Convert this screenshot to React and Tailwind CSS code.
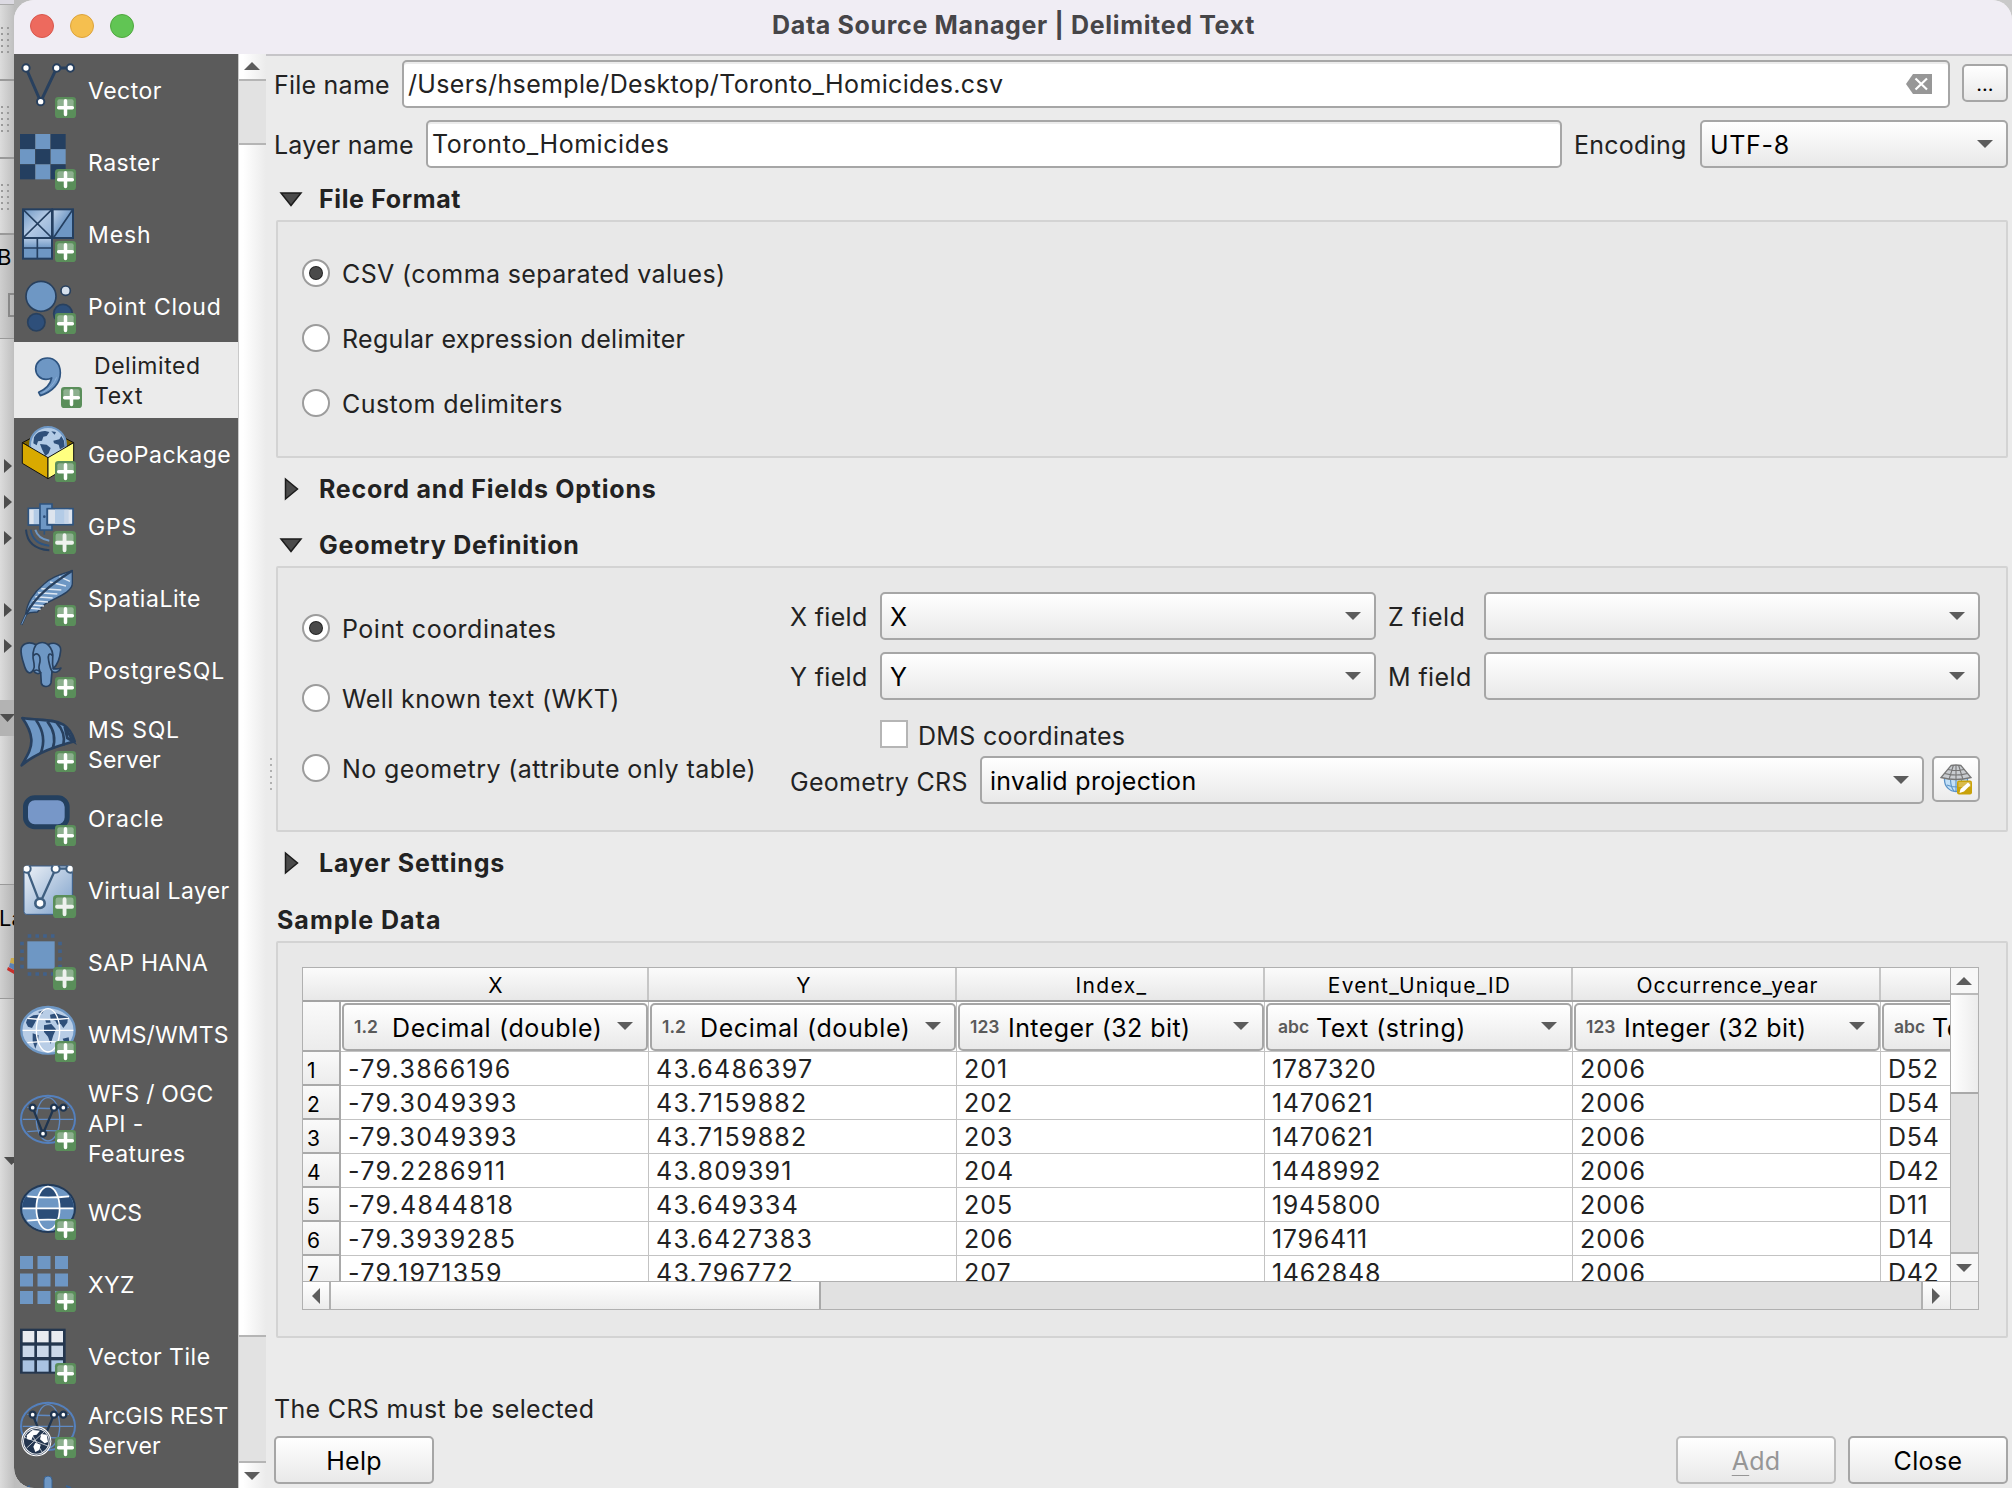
import React from "react";

const NAVY = "#28405e";
const BLUE = "#6e97c4";

/* ---------- sidebar icons (168 × 168 drawing units, shown at 56px) ---------- */

function Badge({ big = false }) {
  return (
    <g transform={big ? "translate(99 99) scale(1.1)" : "translate(105 105)"}>
      <rect width="63" height="63" rx="10" fill="#5a8e5a" />
      <path d="M7 31V13q0-6 6-6h37q6 0 6 6v18z" fill="#8db08f" />
      <path d="M31.500 11.500v41M11 32h41" stroke={big ? "#eef2ee" : "#fff"} strokeWidth="10.500" strokeLinecap="round" fill="none" />
    </g>
  );
}

function GlobeLines({ color, width = 4 }) {
  return (
    <g fill="none" stroke={color} strokeWidth={width}>
      <ellipse cx="84" cy="73" rx="35" ry="65" />
      <path d="M8 73H160M22 37Q84 44 147 37M22 110Q84 104 147 110" />
    </g>
  );
}

function Node({ x, y, r = 11, fill = "#fff", stroke = NAVY, w = 6 }) {
  return <circle cx={x} cy={y} r={r} fill={fill} stroke={stroke} strokeWidth={w} />;
}

const CELLS = [0, 1, 2];

const ICONS = {
  vector: (
    <>
      <path d="M18 18L62 119L110 18H151" fill="none" stroke={NAVY} strokeWidth="9" />
      <Node x={18} y={18} /><Node x={62} y={119} /><Node x={110} y={18} /><Node x={151} y={18} />
      <Badge />
    </>
  ),
  raster: (
    <>
      {CELLS.map((r) =>
        CELLS.map((c) => (
          <rect key={r + "-" + c} x={c * 46} y={r * 45.5} width="45" height="45" fill={(r + c) % 2 ? BLUE : "#243f60"} />
        ))
      )}
      <Badge />
    </>
  ),
  mesh: (
    <>
      <defs>
        <linearGradient id="meshA" x1="0" y1="0" x2="1" y2="1">
          <stop offset="0" stopColor="#6e97c4" /><stop offset=".5" stopColor="#b3c9e4" /><stop offset="1" stopColor="#8fb0d6" />
        </linearGradient>
        <linearGradient id="meshB" x1="0" y1="0" x2="1" y2="1">
          <stop offset="0" stopColor="#c4d5ea" /><stop offset=".55" stopColor="#6e97c4" />
        </linearGradient>
        <linearGradient id="meshC" x1="0" y1="0" x2="0" y2="1">
          <stop offset="0" stopColor="#b3c9e4" /><stop offset=".5" stopColor="#6e97c4" />
        </linearGradient>
      </defs>
      <g stroke="#243f60" strokeWidth="6">
        <rect x="9" y="96" width="87" height="62" fill="url(#meshC)" />
        <rect x="9" y="10" width="87" height="86" fill="url(#meshA)" />
        <rect x="98" y="10" width="61" height="86" fill="url(#meshB)" />
        <path d="M9 10L96 96M96 10L9 96M159 10L100 96M52 96V158M9 126H96" fill="none" strokeWidth="5" />
      </g>
      <Badge />
    </>
  ),
  cloud: (
    <>
      <Node x={129} y={107} r={28} fill="#2e4f7a" w={5} />
      <Node x={63} y={55} r={45} fill={BLUE} w={5} />
      <Node x={137} y={38} r={14} fill="#d6e0ec" w={5} />
      <Node x={49} y={133} r={26} fill="#2e4f7a" w={5} />
      <Badge />
    </>
  ),
  comma: (
    <>
      <path
        d="M64 18C44 18 29 32 29 50C29 69 43 82 60 82C67 82 72 81 77 78C73 98 58 112 38 121L43 131C80 119 103 94 103 62C103 36 87 18 64 18Z"
        fill={BLUE} stroke="#2e5480" strokeWidth="5" strokeLinejoin="round"
      />
      <path d="M92 76Q82 104 50 122" fill="none" stroke="#8db0d8" strokeWidth="3" />
      <Badge />
    </>
  ),
  geopackage: (
    <>
      <path d="M7 50L84 10L161 50L84 95Z" fill="#7d6400" stroke="#111" strokeWidth="3" />
      <circle cx="84" cy="57" r="54" fill="#b3cbe6" stroke="#6e97c4" strokeWidth="6" />
      <path d="M42 34Q52 14 76 15L88 18L80 30L70 32L66 44L54 46L50 58L40 52ZM60 54L80 56L92 66L86 82L76 90L66 70ZM100 44L118 40L124 30L132 44L134 62L120 70L116 56L102 52ZM94 16L108 18L104 26Z" fill="#2e4f7a" />
      <path d="M7 50L84 95V158L7 112Z" fill="#d9aa00" stroke="#111" strokeWidth="3" strokeLinejoin="round" />
      <path d="M84 95L161 50V112L84 158Z" fill="#ffff80" stroke="#111" strokeWidth="3" strokeLinejoin="round" />
      <Badge />
    </>
  ),
  gps: (
    <>
      <rect x="25" y="31" width="36" height="50" fill="#dde4ee" stroke="#2e5480" strokeWidth="5" />
      <rect x="41" y="34" width="18" height="44" fill="#b3cbe6" />
      <path d="M60 18H96V34H82V80H96V96H60Z" fill={BLUE} stroke="#2e5480" strokeWidth="5" />
      <rect x="82" y="32" width="77" height="48" fill="#dde4ee" stroke="#2e5480" strokeWidth="5" />
      <rect x="105" y="35" width="29" height="42" fill="#b3cbe6" />
      <rect x="134" y="35" width="12" height="42" fill="#c6d5e8" />
      <circle cx="73" cy="56" r="4" fill="#2e4f7a" />
      <path d="M73 96V110" stroke="#2e5480" strokeWidth="5" />
      <g fill="none" strokeWidth="6">
        <path d="M18 95Q22 152 88 157" stroke={NAVY} />
        <path d="M32 95Q38 138 88 143" stroke="#2e5480" />
        <path d="M46 95Q54 122 88 128" stroke={BLUE} />
      </g>
      <Badge big />
    </>
  ),
  feather: (
    <>
      <path d="M157 2C128 12 92 20 70 44C42 66 20 100 17 134L30 128L52 126C62 116 66 106 82 98C110 82 158 66 157 40Z" fill={BLUE} stroke={NAVY} strokeWidth="4" />
      <path d="M64 56L124 60M54 68L112 72M46 80L98 84M38 92L84 96M32 104L72 108M28 114L62 118M90 36L138 48M118 20L150 34" stroke="#dfe8f3" strokeWidth="4.500" />
      <path d="M157 2C110 34 50 70 20 130L4 164" fill="none" stroke={NAVY} strokeWidth="7" />
      <path d="M18 134L5 163" stroke={BLUE} strokeWidth="3" />
      <Badge />
    </>
  ),
  postgres: (
    <>
      <g fill={BLUE} stroke={NAVY} strokeWidth="5" strokeLinejoin="round" strokeLinecap="round">
        <path d="M84 8C104 -2 124 8 122 26C120 48 112 68 100 80C112 82 118 80 123 78C118 90 104 94 96 88L93 122C90 136 68 138 64 124L62 92C54 98 44 94 40 84C30 100 20 92 14 74C8 56 0 34 4 18C10 0 34 0 48 8C60 0 74 0 84 8Z" />
        <path d="M48 8C36 26 38 48 42 64C44 74 42 80 40 84M84 8C98 22 100 34 98 50C97 60 98 72 100 80M42 40C50 30 62 38 60 58C58 72 52 78 62 92M96 40C88 30 82 40 86 56C88 66 90 78 96 88M62 92Q52 80 44 86" fill="none" />
      </g>
      <Badge />
    </>
  ),
  mssql: (
    <>
      <path d="M7 6C60 14 98 8 130 26C150 38 158 56 164 76C106 92 50 110 5 148C24 116 36 96 34 70C32 44 20 24 7 6Z" fill={BLUE} stroke={NAVY} strokeWidth="8" strokeLinejoin="round" />
      <path d="M48 12C72 46 76 76 62 112M82 16C104 44 108 68 98 98M110 20C130 42 136 62 130 88M134 32L160 76L142 66Z" fill="none" stroke={NAVY} strokeWidth="8" />
      <Badge />
    </>
  ),
  oracle: (
    <>
      <rect x="16.500" y="23" width="125" height="87" rx="28" fill="#7797c8" stroke="#24405f" strokeWidth="15" />
      <Badge />
    </>
  ),
  virtual: (
    <>
      <defs>
        <linearGradient id="virt" x1="0" y1="0" x2="1" y2="1">
          <stop offset="0" stopColor="#eef2f7" /><stop offset="1" stopColor="#7b9fca" />
        </linearGradient>
        <clipPath id="virtClip"><rect x="11" y="11" width="147" height="147" rx="8" /></clipPath>
      </defs>
      <rect x="12" y="12" width="145" height="145" rx="8" fill="url(#virt)" stroke="#3a5f8c" strokeWidth="3" />
      <g clipPath="url(#virtClip)">
        <path d="M20 20L60 124L107 20H151" fill="none" stroke="#3f5f80" strokeWidth="7" />
        <Node x={20} y={20} r={12} stroke="#3f5f80" /><Node x={60} y={124} r={14} stroke="#3f5f80" w={8} />
        <Node x={107} y={20} r={12} stroke="#3f5f80" /><Node x={151} y={20} r={12} stroke="#3f5f80" />
      </g>
      <Badge big />
    </>
  ),
  hana: (
    <>
      <rect x="22" y="22" width="82" height="82" fill={BLUE} />
      <g stroke="#41618a" strokeWidth="11" strokeDasharray="11 12.200" fill="none">
        <path d="M23 6H104" /><path d="M23 120H104" /><path d="M6 23V104" /><path d="M120 23V104" />
      </g>
      <Badge big />
    </>
  ),
  wms: (
    <>
      <ellipse cx="84" cy="73" rx="80" ry="70" fill="#b8cde6" stroke={BLUE} strokeWidth="7" />
      <path d="M22 38L40 28L56 26L50 40L44 52L36 66L24 62L18 50ZM54 18L72 12L66 24ZM90 26L108 22L144 34L142 50L130 66L122 54L112 56L106 44L92 40ZM72 58L94 54L108 70L100 88L92 114L84 92L72 78ZM38 82L56 88L54 104L46 128L38 106ZM128 98L146 94L148 106L132 108ZM76 42L90 40L92 50L78 50Z" fill="#2e4f7a" />
      <GlobeLines color="#fff" />
      <Badge />
    </>
  ),
  wfs: (
    <>
      <ellipse cx="84" cy="73" rx="81" ry="71" fill="none" stroke="#5480bd" strokeWidth="6" />
      <GlobeLines color="#5f8ac4" />
      <path d="M38 38L69 116L102 38H130" fill="none" stroke="#1f3550" strokeWidth="7" />
      <Node x={38} y={38} r={9} stroke="#1f3550" w={7} /><Node x={69} y={116} r={9} stroke="#1f3550" w={7} />
      <Node x={102} y={38} r={9} stroke="#1f3550" w={7} /><Node x={130} y={38} r={9} stroke="#1f3550" w={7} />
      <Badge />
    </>
  ),
  wcs: (
    <>
      <defs>
        <clipPath id="wcsE"><ellipse cx="84" cy="73" rx="78" ry="68" /></clipPath>
        <clipPath id="wcsI"><ellipse cx="84" cy="73" rx="35" ry="65" /></clipPath>
      </defs>
      <ellipse cx="84" cy="73" rx="81" ry="71" fill={BLUE} stroke="#223a58" strokeWidth="6" />
      <g clipPath="url(#wcsE)" fill="#2b4d78"><rect x="0" y="38" width="168" height="35" /><rect x="0" y="108" width="168" height="40" fill={BLUE} /></g>
      <g clipPath="url(#wcsI)" fill="#2b4d78"><rect x="40" y="0" width="90" height="38" /><rect x="40" y="38" width="90" height="35" fill={BLUE} /><rect x="40" y="73" width="90" height="35" /></g>
      <GlobeLines color="#fff" width={5} />
      <Badge />
    </>
  ),
  xyz: (
    <>
      {CELLS.map((r) =>
        CELLS.map((c) => <rect key={r + "-" + c} x={c * 52.500} y={r * 52.500} width="39" height="39" fill={BLUE} />)
      )}
      <Badge />
    </>
  ),
  tile: (
    <>
      <rect x="0" y="2" width="137" height="135" fill="#24364e" />
      {CELLS.map((r) =>
        CELLS.map((c) => (
          <rect key={r + "-" + c} x={8 + c * 43} y={9 + r * 44} width="35" height="34" fill={["#e9ecf1", "#cad7e8", "#a9c3e2"][r]} />
        ))
      )}
      <Badge />
    </>
  ),
  arcgis: (
    <>
      <ellipse cx="84" cy="73" rx="81" ry="71" fill="none" stroke="#5480bd" strokeWidth="6" />
      <GlobeLines color="#5f8ac4" />
      <path d="M38 38L69 116L102 38H130" fill="none" stroke="#1f3550" strokeWidth="7" />
      <Node x={38} y={38} r={9} stroke="#1f3550" w={7} /><Node x={102} y={38} r={9} stroke="#1f3550" w={7} />
      <Node x={130} y={38} r={9} stroke="#1f3550" w={7} />
      <circle cx="49" cy="118" r="45" fill="#fff" />
      <circle cx="49" cy="118" r="41" fill="none" stroke="#22344e" strokeWidth="2" />
      <circle cx="49" cy="118" r="37" fill="#22344e" />
      <path d="M20 100L38 84L60 86L50 98L40 100L34 114L22 112ZM64 96L80 98L84 120L74 124L60 112ZM46 122L62 128L58 144L46 150L40 134Z" fill="#fff" />
      <path d="M14 106L84 132M30 88L66 150M20 138L72 90" stroke="#fff" strokeWidth="2" />
      <Badge />
    </>
  ),
};

function SideIcon({ name }) {
  return (
    <svg viewBox="0 0 168 168" className="h-14 w-14 shrink-0 overflow-visible">
      {ICONS[name]}
    </svg>
  );
}

/* ---------- sidebar ---------- */

const SOURCES = [
  { icon: "vector", lines: [["Vector", "tracking-[0.47px]"]] },
  { icon: "raster", lines: [["Raster", "tracking-[0.51px]"]] },
  { icon: "mesh", lines: [["Mesh", "tracking-[0.89px]"]] },
  { icon: "cloud", lines: [["Point Cloud", "tracking-[0.74px]"]] },
  { icon: "comma", active: true, h: "h-[76px]", lines: [["Delimited", "tracking-[0.55px]"], ["Text", "tracking-[0.68px]"]] },
  { icon: "geopackage", lines: [["GeoPackage", "tracking-[0.5px]"]] },
  { icon: "gps", lines: [["GPS", "tracking-[0.83px]"]] },
  { icon: "feather", lines: [["SpatiaLite", "tracking-[0.57px]"]] },
  { icon: "postgres", lines: [["PostgreSQL", "tracking-[0.8px]"]] },
  { icon: "mssql", h: "h-[76px]", lines: [["MS SQL", "tracking-[0.73px]"], ["Server", "tracking-[0.19px]"]] },
  { icon: "oracle", lines: [["Oracle", "tracking-[0.83px]"]] },
  { icon: "virtual", lines: [["Virtual Layer", "tracking-[0.38px]"]] },
  { icon: "hana", lines: [["SAP HANA", "tracking-[0.28px]"]] },
  { icon: "wms", lines: [["WMS/WMTS", "tracking-[0.13px]"]] },
  { icon: "wfs", h: "h-[106px]", lines: [["WFS / OGC", "tracking-[0.19px]"], ["API -", "tracking-[0.37px]"], ["Features", "tracking-[0.42px]"]] },
  { icon: "wcs", lines: [["WCS", "tracking-[-0.1px]"]] },
  { icon: "xyz", lines: [["XYZ", "tracking-[0.35px]"]] },
  { icon: "tile", lines: [["Vector Tile", "tracking-[0.52px]"]] },
  { icon: "arcgis", h: "h-[76px]", lines: [["ArcGIS REST", "tracking-[0.02px]"], ["Server", "tracking-[0.19px]"]] },
];

function Sidebar() {
  return (
    <nav className="flex w-[224px] shrink-0 flex-col overflow-hidden rounded-bl-[20px] bg-[#5b5b5b]">
      {SOURCES.map((s) => (
        <div
          key={s.icon}
          className={`flex shrink-0 items-center gap-3 ${s.h || "h-[72px]"} ${s.active ? "bg-[#ebebeb] pl-3 text-[#222]" : "pl-[6px] text-white"}`}
        >
          <SideIcon name={s.icon} />
          <div className="pt-[2px] text-[23px] leading-[30px] whitespace-nowrap">
            {s.lines.map(([t, track]) => (
              <div key={t} className={track}>{t}</div>
            ))}
          </div>
        </div>
      ))}
      <div className="flex h-5 shrink-0 items-start pt-2 pl-[6px]">
        <svg viewBox="0 0 56 12" className="h-3 w-14">
          <rect x="24" y="0" width="8" height="20" rx="4" fill={BLUE} stroke="#3a6290" />
          <path d="M6 12l4-2M46 10l5 2" stroke="#3a6290" strokeWidth="2" />
        </svg>
      </div>
    </nav>
  );
}

/* ---------- small controls ---------- */

function Arrow({ dir = "down", className = "" }) {
  const d = { down: "M0 4H16L8 12Z", up: "M0 12H16L8 4Z", left: "M12 0V16L4 8Z", right: "M4 0V16L12 8Z" }[dir];
  return (
    <svg viewBox="0 0 16 16" className={`h-4 w-4 shrink-0 ${className}`}>
      <path d={d} fill="#5c5c5c" />
    </svg>
  );
}

function SideScroll() {
  return (
    <div className="flex w-7 shrink-0 flex-col border-l border-[#c9c9c9] bg-[linear-gradient(to_right,#fff_15%,#ebebeb)]">
      <div className="flex h-[25px] items-center justify-center pr-px"><Arrow dir="up" className="mt-[-1px]" /></div>
      <div className="h-[66px] border-y-2 border-[#b5b5b5] bg-[#e2e2e2]" />
      <div className="flex-1" />
      <div className="h-[128px] border-y-2 border-[#b5b5b5] bg-[#e2e2e2]" />
      <div className="flex h-[25px] items-center justify-center pr-px"><Arrow /></div>
    </div>
  );
}

function Combo({ className, text, track = "" }) {
  return (
    <div className={`flex h-12 shrink-0 items-center justify-between rounded-[5px] border-2 border-[#a6a6a6] bg-gradient-to-b from-white to-[#e9e9e9] pr-[13px] pl-2 text-black ${className}`}>
      <span className={`pt-px ${track}`}>{text}</span>
      <Arrow className="mt-[-1px]" />
    </div>
  );
}

function Radio({ on = false, label, track, className }) {
  return (
    <div className={`flex items-center ${className}`}>
      <div className="flex h-7 w-7 shrink-0 items-center justify-center rounded-full border-2 border-[#9c9c9c] bg-white">
        {on && <div className="h-[12px] w-[12px] rounded-full bg-[#4a4a4a] ring-1 ring-[#222]" />}
      </div>
      <span className={`ml-3 pt-[2px] whitespace-nowrap ${track}`}>{label}</span>
    </div>
  );
}

function SectionHeader({ open, title, track, className }) {
  return (
    <div className={`flex items-center ${className}`}>
      <svg viewBox="0 0 24 24" className="ml-[5px] h-6 w-6 shrink-0">
        <path d={open ? "M2 6H22L12 18.500Z" : "M6.500 2V22L18.500 12Z"} fill="#4a4a4a" stroke="#1c1c1c" strokeWidth="1.500" />
      </svg>
      <span className={`ml-4 font-bold ${track}`}>{title}</span>
    </div>
  );
}

const GROUP = "ml-[3px] w-[1732px] shrink-0 rounded-[2px] border-2 border-[#d3d3d3] bg-[#e8e8e8]";
const BUTTON = "flex h-12 items-center justify-center rounded-[5px] border-2 bg-gradient-to-b from-white to-[#e9e9e9] pt-[2px]";

/* ---------- sample data table ---------- */

const COLUMNS = [
  { name: "X", tag: "1.2", type: "Decimal (double)", track: "tracking-[0.62px]" },
  { name: "Y", tag: "1.2", type: "Decimal (double)", track: "tracking-[0.62px]" },
  { name: "Index_", tag: "123", type: "Integer (32 bit)", track: "tracking-[0.42px]" },
  { name: "Event_Unique_ID", tag: "abc", type: "Text (string)", track: "tracking-[0.52px]" },
  { name: "Occurrence_year", tag: "123", type: "Integer (32 bit)", track: "tracking-[0.42px]" },
  { name: "", tag: "abc", type: "Text (string)", track: "tracking-[0.58px]" },
];
const HEAD_TRACK = ["", "", "tracking-[1.4px]", "tracking-[1.15px]", "tracking-[0.88px]", ""];
const CELL_TRACK = ["tracking-[1.3px]", "tracking-[1.25px]", "tracking-[1px]", "tracking-[0.7px]", "tracking-[0.9px]", "tracking-[0.7px]"];
const ROWS = [
  ["-79.3866196", "43.6486397", "201", "1787320", "2006", "D52"],
  ["-79.3049393", "43.7159882", "202", "1470621", "2006", "D54"],
  ["-79.3049393", "43.7159882", "203", "1470621", "2006", "D54"],
  ["-79.2286911", "43.809391", "204", "1448992", "2006", "D42"],
  ["-79.4844818", "43.649334", "205", "1945800", "2006", "D11"],
  ["-79.3939285", "43.6427383", "206", "1796411", "2006", "D14"],
  ["-79.1971359", "43.796772", "207", "1462848", "2006", "D42"],
];

function RowHead({ children, className }) {
  return (
    <div className={`w-[38px] shrink-0 border-r-2 border-b-2 border-[#a9a9a9] bg-gradient-to-b from-[#fafafa] to-[#ececec] pl-1 text-[21px] text-black ${className}`}>
      {children}
    </div>
  );
}

function DataTable() {
  return (
    <div className="mt-6 ml-6 flex h-[343px] w-[1677px] flex-col border border-[#b0b0b0] bg-white">
      <div className="flex h-[313px] shrink-0">
        <div className="w-[1647px] shrink-0 overflow-hidden">
          <div className="flex h-[34px] w-[1886px] border-b-2 border-[#a3a3a3] bg-gradient-to-b from-[#fbfbfb] to-[#e8e8e8] text-[21px] text-black">
            <div className="w-[38px] shrink-0" />
            {COLUMNS.map((c, i) => (
              <div key={i} className={`flex w-[308px] shrink-0 items-center justify-center border-r-2 border-[#c6c6c6] pt-[4px] pl-[3px] ${HEAD_TRACK[i]}`}>
                {c.name}
              </div>
            ))}
          </div>
          <div className="flex h-[50px] w-[1886px]">
            <RowHead />
            {COLUMNS.map((c, i) => (
              <div key={i} className="w-[308px] shrink-0 border-r border-b border-[#c3c3c3] pt-px pl-px">
                <div className="flex h-12 w-[306px] items-center rounded-[5px] border-2 border-[#a6a6a6] bg-gradient-to-b from-white to-[#e9e9e9] pr-[13px] pl-[10px] text-black">
                  <span className="w-[38px] shrink-0 text-[17.5px] font-semibold text-[#5a5a5a]">{c.tag}</span>
                  <span className={`flex-1 pt-[2px] whitespace-nowrap ${c.track}`}>{c.type}</span>
                  <Arrow className="mt-[-2px]" />
                </div>
              </div>
            ))}
          </div>
          {ROWS.map((r, n) => (
            <div key={n} className="flex h-[34px] w-[1886px]">
              <RowHead className="pt-[2px] leading-[33px]">{n + 1}</RowHead>
              {r.map((v, i) => (
                <div key={i} className={`w-[308px] shrink-0 border-r border-b border-[#c3c3c3] pl-[7px] leading-[35px] text-[#222] ${CELL_TRACK[i]}`}>
                  {v}
                </div>
              ))}
            </div>
          ))}
        </div>
        <div className="flex flex-1 flex-col border-l border-[#b0b0b0] bg-[#e1e1e1]">
          <div className="flex h-[27px] items-center justify-center border-b-2 border-[#b9b9b9] bg-[#f7f7f7] pr-px"><Arrow dir="up" /></div>
          <div className="h-[99px] border-b-2 border-[#a9a9a9] bg-gradient-to-r from-white to-[#ececec]" />
          <div className="flex-1" />
          <div className="flex h-[29px] items-center justify-center border-t-2 border-[#b0b0b0] bg-[#f7f7f7] pr-px"><Arrow /></div>
        </div>
      </div>
      <div className="flex flex-1 border-t border-[#b0b0b0] bg-[#e1e1e1]">
        <div className="flex w-7 items-center justify-center border-r-2 border-[#b0b0b0] bg-gradient-to-b from-white to-[#ececec]"><Arrow dir="left" className="ml-[-1px]" /></div>
        <div className="w-[490px] border-r-2 border-[#a9a9a9] bg-gradient-to-b from-white to-[#ececec]" />
        <div className="flex-1" />
        <div className="flex w-[29px] items-center justify-center border-l-2 border-[#b0b0b0] bg-gradient-to-b from-white to-[#ececec] pr-[2px]"><Arrow dir="right" /></div>
        <div className="w-[28px] border-l border-[#b0b0b0] bg-[#ebebeb]" />
      </div>
    </div>
  );
}

function CrsIcon() {
  return (
    <svg viewBox="0 0 32 32" className="h-8 w-8">
      <circle cx="16" cy="17" r="11.500" fill="#c3e0f7" stroke="#5b93c7" strokeWidth="1.300" />
      <path d="M16 17V29M7 22Q16 26 26 22M10.500 17Q11 25 14 28M21.500 17Q21 25 18 28" fill="none" stroke="#5b93c7" strokeWidth="1.100" />
      <path d="M11 2.500Q16 1.500 21 2.500L31 14.500Q16 18.500 1 14.500Z" fill="#c9ccd0" stroke="#777" strokeWidth="1.300" />
      <path d="M16 2V17M13.500 2L9 16.500M18.500 2L23 16.500M8 6.500Q16 8.500 24 6.500M4.500 10.500Q16 13.500 27.500 10.500" fill="none" stroke="#777" strokeWidth="1.100" />
      <rect x="17" y="17.500" width="15" height="14" rx="2" fill="#c9a20a" />
      <path d="M18.500 19h12v5h-12z" fill="#d9bb4c" />
      <path d="M28 19.500L30.500 22L24 28.500L19.500 30L20.500 26Z" fill="#fff" />
    </svg>
  );
}

/* ---------- main form ---------- */

function Main() {
  return (
    <main className="relative flex flex-1 flex-col border-t-2 border-[#c6c5c8] bg-[#ebebeb] pl-2 text-[25px] leading-[30px] whitespace-nowrap text-[#222]">
      <div className="mt-[4px] flex h-12 shrink-0 items-center">
        <span className="w-[128px] pt-[2px] tracking-[0.23px]">File name</span>
        <div className="flex h-12 w-[1548px] items-center justify-between rounded-[5px] border-2 border-[#a6a6a6] bg-white pr-4 pl-1 shadow-[inset_0_2px_0_#ececec]">
          <span className="tracking-[0.35px]">/Users/hsemple/Desktop/Toronto_Homicides.csv</span>
          <svg viewBox="0 0 26 20" className="h-5 w-[26px]">
            <path d="M0 10L7 0H26V20H7Z" fill="#979797" />
            <path d="M9.500 4.500L21 15.500M21 4.500L9.500 15.500" stroke="#fff" strokeWidth="2.200" />
          </svg>
        </div>
        <div className="mb-[2px] ml-3 flex h-[38px] w-[46px] items-end justify-center rounded-[5px] border-2 border-[#a6a6a6] bg-gradient-to-b from-white to-[#e9e9e9] pb-[4px] text-[20px] leading-[24px] text-black">
          ...
        </div>
      </div>

      <div className="mt-3 flex h-12 shrink-0 items-center">
        <span className="w-[152px] pt-[2px] tracking-[0.21px]">Layer name</span>
        <div className="flex h-12 w-[1136px] items-center rounded-[5px] border-2 border-[#a6a6a6] bg-white pl-1 shadow-[inset_0_2px_0_#ececec]">
          <span className="tracking-[0.55px]">Toronto_Homicides</span>
        </div>
        <span className="ml-[12px] w-[126px] pt-[2px] tracking-[0.26px]">Encoding</span>
        <Combo className="w-[308px]" text="UTF-8" track="tracking-[0.68px]" />
      </div>

      <SectionHeader open title="File Format" track="tracking-[0.63px]" className="h-[52px] shrink-0 pt-[10px]" />
      <div className={`${GROUP_ML} h-[238px] pt-[18px] pl-6`}>
        <Radio on label="CSV (comma separated values)" track="tracking-[0.38px]" className="h-[65px]" />
        <Radio label="Regular expression delimiter" track="tracking-[0.31px]" className="h-[65px]" />
        <Radio label="Custom delimiters" track="tracking-[0.45px]" className="h-[65px]" />
      </div>

      <SectionHeader title="Record and Fields Options" track="tracking-[0.75px]" className="h-[60px] shrink-0 pt-px" />
      <SectionHeader open title="Geometry Definition" track="tracking-[0.75px]" className="h-[48px] shrink-0 pt-[6px]" />
      <div className={`${GROUP_ML} flex h-[266px] pl-6`}>
        <div className="w-[488px] shrink-0 pt-[25px]">
          <Radio on label="Point coordinates" track="tracking-[0.5px]" className="h-[70px]" />
          <Radio label="Well known text (WKT)" track="tracking-[0.4px]" className="h-[70px]" />
          <Radio label="No geometry (attribute only table)" track="tracking-[0.42px]" className="h-[70px]" />
        </div>
        <div className="pt-6">
          <div className="flex items-center">
            <span className="w-[90px] pt-[2px] tracking-[0.33px]">X field</span>
            <Combo className="w-[496px]" text="X" />
            <span className="ml-[12px] w-[96px] pt-[2px] tracking-[0.48px]">Z field</span>
            <Combo className="w-[496px]" text="" />
          </div>
          <div className="mt-3 flex items-center">
            <span className="w-[90px] pt-[2px] tracking-[0.33px]">Y field</span>
            <Combo className="w-[496px]" text="Y" />
            <span className="ml-[12px] w-[96px] pt-[2px] tracking-[0.41px]">M field</span>
            <Combo className="w-[496px]" text="" />
          </div>
          <div className="mt-5 flex h-7 items-center pl-[90px]">
            <div className="h-7 w-7 border-2 border-[#b5b5b5] bg-white" />
            <span className="ml-[10px] pt-[3px] tracking-[0.3px]">DMS coordinates</span>
          </div>
          <div className="mt-2 flex items-center">
            <span className="w-[190px] pt-[3px] tracking-[0.3px]">Geometry CRS</span>
            <Combo className="w-[944px]" text="invalid projection" track="tracking-[0.3px] pt-[2px]" />
            <div className="mb-[2px] ml-2 flex h-[46px] w-12 items-center justify-center rounded-[5px] border-2 border-[#a6a6a6] bg-gradient-to-b from-white to-[#ececec]">
              <CrsIcon />
            </div>
          </div>
        </div>
      </div>

      <SectionHeader title="Layer Settings" track="tracking-[0.82px]" className="h-[61px] shrink-0 pt-px" />
      <div className="h-[48px] shrink-0 pt-[12px] pl-[3px] font-bold tracking-[1px]">Sample Data</div>
      <div className={`${GROUP_ML} h-[397px]`}>
        <DataTable />
      </div>

      <div className="h-[98px] shrink-0 pt-[56px] tracking-[0.33px]">The CRS must be selected</div>
      <div className="flex shrink-0 text-black">
        <div className={`${BUTTON} w-[160px] border-[#a6a6a6] tracking-[0.26px]`}>Help</div>
        <div className={`${BUTTON} ml-[1242px] w-[160px] border-[#bdbdbd] tracking-[0.22px] text-[#969696]`}>
          <span className="underline decoration-1 underline-offset-[5px]">A</span>dd
        </div>
        <div className={`${BUTTON} ml-3 w-[160px] border-[#a6a6a6] tracking-[0.37px]`}>Close</div>
      </div>

      {/* splitter grip */}
      <div className="absolute top-[702px] left-[4px] h-[33px] w-[2px] bg-[repeating-linear-gradient(to_bottom,#b0b0b0_0_2px,transparent_2px_6px)]" />
    </main>
  );
}

const GROUP_ML = GROUP.replace("ml-[3px]", "ml-[2px]");

/* ---------- strip of the window behind ---------- */

const DOTS = "ml-[-1px] h-8 w-3 bg-[radial-gradient(circle,#9a9a9a_1px,transparent_1.4px)] bg-[length:6px_6px]";

function Tri({ down = false, className }) {
  return (
    <svg viewBox="0 0 14 14" className={`h-[14px] w-[14px] shrink-0 ${className}`}>
      <path d={down ? "M0 3H15L7.500 11Z" : "M4 0V14L12 7Z"} fill="#4d4d4d" />
    </svg>
  );
}

function Behind() {
  return (
    <div className="flex w-[14px] shrink-0 flex-col overflow-hidden bg-gradient-to-r from-[#dcdcdc] to-[#bfbfbf] text-[22px] leading-[26px] text-black">
      <div className="h-[5px] shrink-0 border-b border-[#aaa] bg-[#dcdae2]" />
      <div className="h-[76px] shrink-0 border-b-2 border-[#999] pt-[20px]"><div className={DOTS} /></div>
      <div className="h-[78px] shrink-0 border-b-2 border-[#999] pt-[23px]"><div className={DOTS} /></div>
      <div className="h-[76px] shrink-0 border-b-2 border-[#999] pt-[23px]"><div className={DOTS} /></div>
      <div className="h-[104px] shrink-0 border-b border-[#999] bg-gradient-to-r from-[#cfcfcf] to-[#b5b5b5] pt-[9px]">
        <div className="ml-[-3px] h-[26px]">B</div>
        <div className="mt-[23px] ml-2 h-6 w-6 border-2 border-[#888]" />
      </div>
      <div className="flex h-[361px] shrink-0 flex-col pt-[120px]">
        <Tri className="" />
        <Tri className="mt-[22px]" />
        <Tri className="mt-[22px]" />
        <Tri className="mt-[58px]" />
        <Tri className="mt-[22px]" />
      </div>
      <div className="h-9 shrink-0 bg-[#b3b3b3] pt-[11px]"><Tri down className="" /></div>
      <div className="h-[149px] shrink-0 border-b border-[#999]" />
      <div className="h-[114px] shrink-0 border-b border-[#999] bg-gradient-to-r from-[#d0d0d0] to-[#b5b5b5] pt-[17px]">
        <div className="ml-[-1px] h-[34px] pt-[3px]">La</div>
        <svg viewBox="0 0 8 16" className="mt-[22px] ml-[6px] h-4 w-2">
          <path d="M5 0L8 0V6L4 5Z" fill="#c9a94a" /><path d="M4 5L8 6V12L3 9Z" fill="#5a82b4" /><path d="M2 9L8 12V16L1 12Z" fill="#c8302c" />
        </svg>
      </div>
      <div className="flex-1 pt-[155px]"><Tri down className="ml-[4px]" /></div>
    </div>
  );
}

export default function App() {
  return (
    <div className="flex h-[1488px] w-[2012px] overflow-hidden bg-[linear-gradient(to_right,#bdbdbd,#c9c9c9)] font-['Inter',sans-serif]">
      <Behind />
      <div className="flex min-w-0 flex-1 flex-col overflow-hidden rounded-l-[20px] rounded-tr-[20px] bg-[#ebebeb]">
        <header className="flex h-[54px] shrink-0 items-center bg-[#f0edf4]">
          <div className="flex w-[232px] items-center gap-4 pb-[2px] pl-4">
            <div className="h-6 w-6 rounded-full border border-[#d8574d] bg-[#ed6a5e]" />
            <div className="h-6 w-6 rounded-full border border-[#dca33c] bg-[#f5bf4f]" />
            <div className="h-6 w-6 rounded-full border border-[#50a73f] bg-[#61c554]" />
          </div>
          <h1 className="ml-[526px] pb-[3px] text-[25px] font-bold tracking-[0.66px] whitespace-nowrap text-[#464548]">
            Data Source Manager | Delimited Text
          </h1>
        </header>
        <div className="flex min-h-0 flex-1">
          <Sidebar />
          <SideScroll />
          <Main />
        </div>
      </div>
    </div>
  );
}
